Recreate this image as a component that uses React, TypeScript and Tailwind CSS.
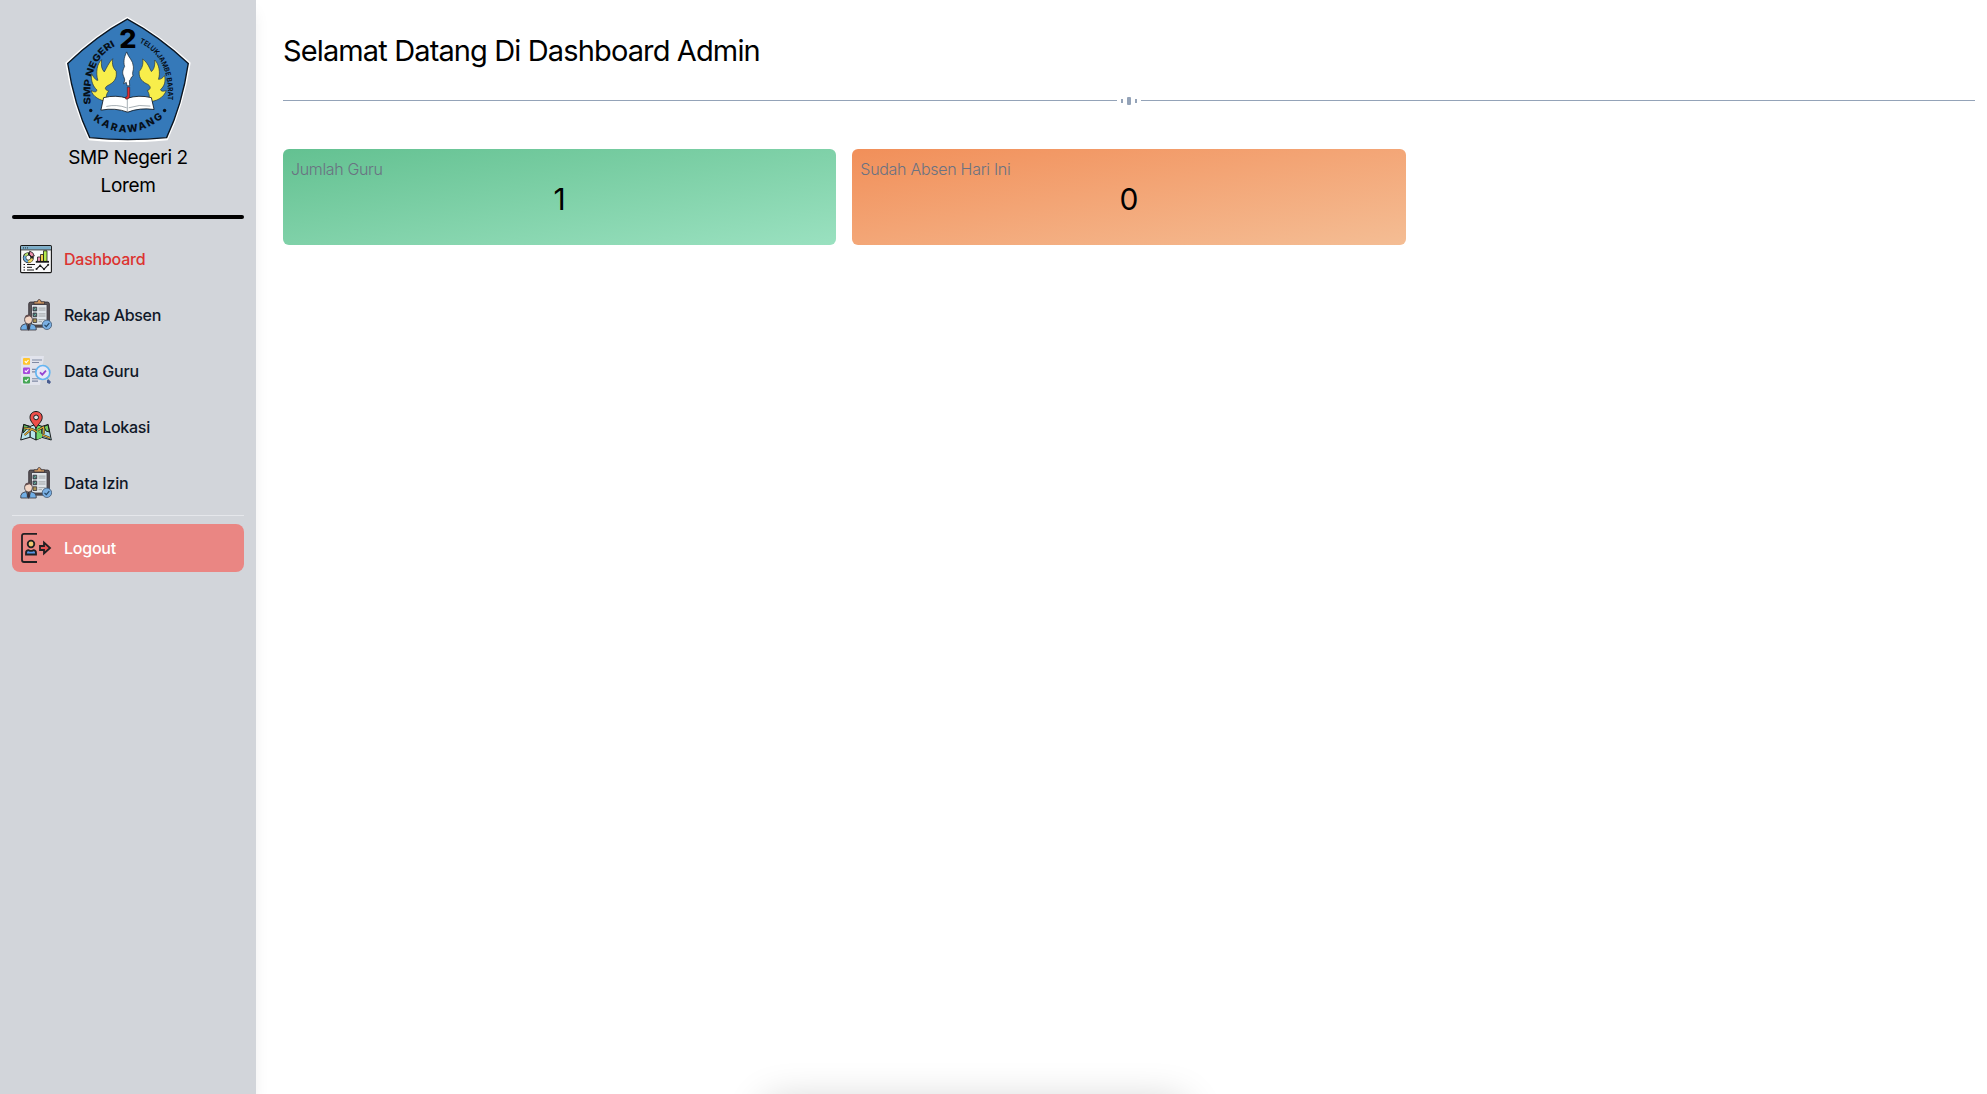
import React from "react";

function Logo() {
  return (
    <svg viewBox="49 20 372 372" className="size-[126px]" fontFamily="Inter, sans-serif">
      <defs>
        <path id="arcLeft" d="M125 281 Q113 154 196 109" />
        <path id="arcRight" d="M268 98 Q366 144 351 286" />
        <path id="arcBottom" d="M132 327 Q235 403 339 320" />
      </defs>
      <path
        d="M233 22 Q330 75 420 158 Q400 285 352 387 Q233 399 119 387 Q70 285 50 158 Q140 72 233 22Z"
        fill="#fff"
      />
      <path
        d="M233 29 Q328 80 413 160 Q395 283 349 379 Q233 391 122 379 Q76 283 57 160 Q142 78 233 29Z"
        fill="#3579b9"
        stroke="#0b1520"
        strokeWidth="4"
      />
      <text x="209" y="115" fontSize="77" fontWeight="800" textLength="51" lengthAdjust="spacingAndGlyphs">
        2
      </text>
      <text fontSize="28" fontWeight="800" fill="#07101a">
        <textPath href="#arcLeft" textLength="200" lengthAdjust="spacingAndGlyphs">
          SMP NEGERI
        </textPath>
      </text>
      <text fontSize="21" fontWeight="700" fill="#07101a">
        <textPath href="#arcRight" textLength="204" lengthAdjust="spacingAndGlyphs">
          TELUKJAMBE BARAT
        </textPath>
      </text>
      <text fontSize="30" fontWeight="800" fill="#07101a">
        <textPath href="#arcBottom" textLength="226">KARAWANG</textPath>
      </text>
      <circle cx="125" cy="299" r="5" fill="#07101a" />
      <circle cx="343" cy="299" r="5" fill="#07101a" />
      <g fill="#f8ee4b" stroke="#27343a" strokeWidth="2">
        <path d="M177 273 C150 270 132 258 126 240 C137 246 143 245 143 238 C132 228 125 212 127 190 C134 201 139 210 146 210 C139 186 144 160 157 149 C155 166 157 177 165 185 C172 174 178 157 190 146 C187 163 191 174 200 183 C204 208 190 218 174 226 C164 233 168 239 178 241 C169 253 169 263 177 273Z" />
        <path d="M292 273 C319 274 341 260 348 240 C337 244 332 242 331 237 C342 228 347 214 343 196 C336 205 331 207 325 207 C331 188 327 162 314 150 C315 168 311 179 304 184 C298 174 294 158 278 147 C281 161 277 174 268 184 C266 206 280 216 294 222 C304 229 302 237 292 240 C300 253 300 263 292 273Z" />
      </g>
      <path
        d="M163 261 Q200 252 233 263 Q266 252 304 261 L312 296 Q270 290 234 304 Q198 290 155 298Z"
        fill="#fff"
        stroke="#111820"
        strokeWidth="2.5"
      />
      <path d="M233 263 V304 M171 287 Q202 280 231 291 M237 291 Q268 280 301 286" fill="none" stroke="#52616b" strokeWidth="1.5" />
      <path
        d="M231 126 C236 142 250 151 251 170 C252 182 246 187 250 197 C243 199 244 208 239 211 L240 226 H232 L230 216 L222 220 Q229 209 222 198 C217 188 220 178 225 169 C220 152 226 137 231 126Z"
        fill="#fff"
        stroke="#17242d"
        strokeWidth="2"
      />
      <path d="M233 230 H240 V257 Q237 268 228 265 V259 Q233 261 233 253Z" fill="#e32b2e" stroke="#3a1719" strokeWidth="1.5" />
    </svg>
  );
}

function DashboardIcon() {
  return (
    <svg viewBox="0 0 32 32" className="size-8 shrink-0" fill="none" stroke="#171717">
      <rect x=".6" y="2.6" width="30.8" height="27" rx="1" fill="#fafafa" strokeWidth="1.1" />
      <path d="M1.2 3.2H30.8V6.6H1.2Z" fill="#78acc8" stroke="none" />
      <path d="M1 6.9H31M3 4.9H4M5 4.9H6M7 4.9H8" strokeWidth=".8" />
      <circle cx="8.3" cy="14.7" r="3.8" stroke="#222" strokeWidth="3.4" />
      <path d="M5.1 12.8A3.8 3.8 0 0 0 8 18.5" stroke="#68a9d8" strokeWidth="2.2" />
      <path d="M8 18.5A3.8 3.8 0 0 0 12 15.5" stroke="#ecd35e" strokeWidth="2.2" />
      <path d="M5.1 12.8A3.8 3.8 0 0 1 8 10.9" stroke="#b4df6c" strokeWidth="2.2" />
      <path d="M9.7 8.2A6 6 0 0 1 14.3 13L11.4 13.5L9.4 11.5Z" fill="#ed8daa" strokeWidth=".8" />
      <path d="M17.5 18V14H20.5V18" fill="#ef8fb4" strokeWidth=".8" />
      <path d="M20.5 18V11.5H23.5V18" fill="#f3ce4d" strokeWidth=".8" />
      <path d="M23.5 18V7.8H27V18" fill="#b4eb4d" strokeWidth=".8" />
      <path d="M15.8 18.8H29" strokeWidth="1.8" />
      <path d="M3.5 21.5H5M7 21.5H15M3.5 24.3H5M7 24.3H12M3.5 27H5M7 27H14" strokeWidth="1" />
      <path d="M16.5 26L20.2 22.4L24 26.2L28.2 21.8" strokeWidth="1.1" />
      <g fill="#222" stroke="none">
        <circle cx="16.5" cy="26" r="1" />
        <circle cx="20.2" cy="22.4" r="1" />
        <circle cx="24" cy="26.2" r="1" />
        <circle cx="28.2" cy="21.8" r="1" />
      </g>
    </svg>
  );
}

function ClipboardIcon() {
  return (
    <svg viewBox="0 0 32 32" className="size-8 shrink-0" stroke="#39343a" strokeWidth=".8">
      <rect x="8.8" y="3.1" width="20.5" height="25" rx="1.7" fill="#5b5659" strokeWidth="1" />
      <path d="M11.5 5.5H27V26H11.5Z" fill="#dfe5ea" />
      <path d="M14 5V2.8H17.5C17.5-.3 21-.3 21 2.8H24.5V5Z" fill="#d49b63" />
      <g fill="#496875">
        <path d="M13 8.2H16.7V11.9H13ZM13 14H16.7V17.7H13Z" />
        <path d="M13 19.8H16.7V23.5H13Z" fill="#ab9452" />
      </g>
      <path d="M13.8 10L14.7 10.8L16 9M13.8 15.8L14.7 16.6L16 14.8" fill="none" stroke="#72cb9c" />
      <path d="M18.5 9.1H25.5M18.5 11H25.5M18.5 14.9H25.5M18.5 17H25.5M18.5 20.7H25.5M18.5 22.7H22" stroke="#8e9294" />
      <path d="M.8 31V28.5Q1.3 25.5 5.5 24.8H11.5Q15.8 25.6 16.2 29V31Z" fill="#70aee5" />
      <path d="M6 24.3L8.5 30.7L11.2 24.3Z" fill="#f0f0ec" />
      <path d="M7.8 25H9.3L9.8 29.8L8.5 31L7.2 29.8Z" fill="#35313b" />
      <ellipse cx="8.5" cy="20.6" rx="3.9" ry="4.4" fill="#f3d7c6" />
      <path d="M4.8 18.8Q5 15.9 8 15.8Q12 15.8 12.2 18.8L9.5 17.2Z" fill="#675151" stroke="none" />
      <circle cx="26.9" cy="25.8" r="4.7" fill="#79afe3" stroke="#3d5570" />
      <path d="M24.5 25.8L26.3 27.6L29.3 24.1" fill="none" stroke="#254663" strokeWidth="1.2" />
    </svg>
  );
}

function TeacherDataIcon() {
  return (
    <svg viewBox="0 0 32 32" className="size-8 shrink-0" fill="none">
      <path d="M3 1H24L20 30H3Q1 30 1 28V3Q1 1 3 1Z" fill="#e1e3ec" />
      <rect x="3" y="3" width="7" height="6.7" rx="1" fill="#ffc52e" />
      <rect x="3" y="12.4" width="7" height="6.7" rx="1" fill="#a64bdc" />
      <rect x="3" y="21.7" width="7" height="6.7" rx="1" fill="#45a655" />
      <path d="M4.8 6.2L6.2 7.6L8.5 5M4.8 15.6L6.2 17L8.5 14.4M4.8 24.9L6.2 26.3L8.5 23.7" stroke="#fff" strokeWidth="1.1" />
      <path d="M12 5H22M12 7.5H19M12 14.4H16M12 16.9H15M12 23.7H20M12 26.1H18" stroke="#7f89a2" strokeWidth="1.1" />
      <circle cx="22.8" cy="17.5" r="7" fill="#e6e8f7" stroke="#64b5f1" strokeWidth="1.7" />
      <path d="M20 17.3L22.3 19.6L26 15.6" stroke="#9545d1" strokeWidth="1.8" />
      <path d="M27.4 23.2L28.3 25" stroke="#70aace" strokeWidth="1" />
      <path d="M27 25.3L28.7 24.5L31 27L29.5 29L27 27.8Z" fill="#465b8f" />
    </svg>
  );
}

function MapIcon() {
  return (
    <svg viewBox="0 0 32 32" className="size-8 shrink-0" stroke="#171b1b" strokeWidth="1" strokeLinejoin="round">
      <path d="M3.7 13.5L10.2 15.4V26.2L.7 29Z" fill="#b8e4ec" />
      <path d="M10.2 15.4L16 13.2V29L10.2 26.2Z" fill="#b8e4ec" />
      <path d="M16 13.2L22 15.4V26.4L16 29Z" fill="#70d66d" />
      <path d="M22 15.4L28.2 13.5L31.3 29L22 26.4Z" fill="#a9dced" />
      <path d="M3.7 13.5L9 15.4L3 22Z" fill="#60ba61" />
      <path d="M24 15.5L28 13.7L29.3 21L26 20Z" fill="#74cd62" />
      <path d="M4 17L12 18L20 23L30 27M4.5 24L12 18M18 19L23.5 16L24 23" fill="none" stroke="#292c26" strokeWidth="2.2" />
      <path d="M4 17L12 18L20 23L30 27M4.5 24L12 18M18 19L23.5 16L24 23" fill="none" stroke="#e6ae36" strokeWidth="1.2" />
      <path d="M17 20L22 23V26.4L17 28.5Z" fill="#70d66d" stroke="none" />
      <path d="M16 17.1C13 12.5 10 9.9 10 6.4C10 2.8 12.8.5 16 .5C19.4.5 22.2 2.8 22.2 6.4C22.2 9.9 19 12.5 16 17.1Z" fill="#ed4f4a" />
      <circle cx="16.1" cy="6.4" r="2.4" fill="#dce2e6" />
    </svg>
  );
}

function LogoutIcon() {
  return (
    <svg viewBox="0 0 32 32" className="size-8 shrink-0" fill="none" stroke="#202023" strokeWidth="1.8">
      <path d="M17 1.8H4Q2 1.8 2 3.8V28Q2 30 4 30H17" />
      <circle cx="11" cy="12" r="3.3" fill="#f0c66f" />
      <path d="M6 22.5V21Q6 18.2 8.7 18.2Q11 19.6 13.3 18.2Q16 18.2 16 21V22.5Z" fill="#5795e5" />
      <path d="M20 14H24V10.6L30 16L24 21.4V18H20Z" fill="#e65353" />
    </svg>
  );
}

const items = [
  { label: "Dashboard", Icon: DashboardIcon, color: "text-[#dc3330]", tracking: "tracking-[-0.24px]" },
  { label: "Rekap Absen", Icon: ClipboardIcon, color: "text-gray-900", tracking: "tracking-[-0.33px]" },
  { label: "Data Guru", Icon: TeacherDataIcon, color: "text-gray-900", tracking: "tracking-[-0.23px]" },
  { label: "Data Lokasi", Icon: MapIcon, color: "text-gray-900", tracking: "tracking-[-0.27px]" },
  { label: "Data Izin", Icon: ClipboardIcon, color: "text-gray-900", tracking: "tracking-[-0.24px]" },
];

const stats = [
  { label: "Jumlah Guru", value: 1, color: "from-[#63c191] to-[#9ae1c0]", tracking: "tracking-[-0.35px]" },
  { label: "Sudah Absen Hari Ini", value: 0, color: "from-[#f18f59] to-[#f4bd94]", tracking: "tracking-[-0.29px]" },
];

export default function App() {
  return (
    <div className="relative flex h-screen overflow-hidden bg-white font-['Inter',sans-serif] text-black">
      <aside className="w-64 shrink-0 bg-[#d2d5da] px-3 shadow-[0_10px_15px_-3px_rgba(0,0,0,0.1)]">
        <div className="flex flex-col items-center pt-4">
          <Logo />
          <p className="mt-0.5 text-center text-[19px] leading-7 tracking-[-0.35px]">
            SMP Negeri 2<br />
            Lorem
          </p>
        </div>
        <hr className="mt-[15px] h-1 rounded border-0 bg-black" />
        <nav className="mt-4 flex flex-col gap-2">
          {items.map(({ label, Icon, color, tracking }) => (
            <a key={label} className={`flex h-12 items-center gap-3 p-2 text-base font-medium ${color} ${tracking}`}>
              <Icon />
              {label}
            </a>
          ))}
        </nav>
        <hr className="mt-2 border-gray-200" />
        <a className="mt-2 flex h-12 items-center gap-3 rounded-lg bg-[#ea8683] p-2 text-base font-medium tracking-[-0.25px] text-white">
          <LogoutIcon />
          Logout
        </a>
      </aside>
      <main className="min-w-0 flex-1 pt-[33px] pr-3 pl-[27px]">
        <h1 className="text-[29px] leading-9 tracking-[-0.87px]">Selamat Datang Di Dashboard Admin</h1>
        <div className="mt-[27px] flex h-[9px] items-center">
          <div className="h-px flex-1 bg-[#94a3b8]" />
          <div className="flex w-6 items-center justify-center gap-1">
            <span className="h-1 w-0.5 bg-[#94a3b8]" />
            <span className="h-2 w-1 rounded-[1px] bg-[#94a3b8]" />
            <span className="h-1 w-0.5 bg-[#94a3b8]" />
          </div>
          <div className="h-px flex-1 bg-[#94a3b8]" />
        </div>
        <div className="mt-11 grid grid-cols-3 gap-4">
          {stats.map(({ label, value, color, tracking }) => (
            <section key={label} className={`h-24 rounded-md bg-linear-to-br p-2 ${color}`}>
              <h2 className={`text-base font-light text-gray-500 ${tracking}`}>{label}</h2>
              <p className="text-center text-3xl">{value}</p>
            </section>
          ))}
        </div>
      </main>
      <div className="absolute -bottom-12 left-[765px] h-10 w-[420px] rounded-lg shadow-[0_0_40px_rgba(0,0,0,0.2)]" />
    </div>
  );
}
